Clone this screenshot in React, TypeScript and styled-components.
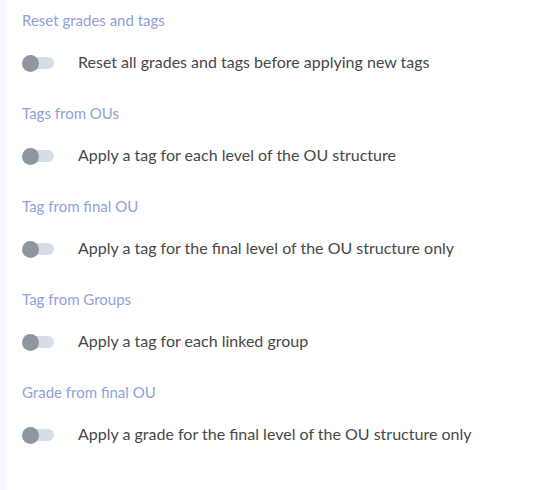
import React from "react";
import styled, { createGlobalStyle } from "styled-components";

const GlobalStyle = createGlobalStyle`
  html, body {
    margin: 0;
    padding: 0;
    background: #ffffff;
  }
  body {
    font-family: "Lato", "Open Sans", sans-serif;
  }
`;

const sections = [
  { title: "Reset grades and tags", label: "Reset all grades and tags before applying new tags" },
  { title: "Tags from OUs", label: "Apply a tag for each level of the OU structure" },
  { title: "Tag from final OU", label: "Apply a tag for the final level of the OU structure only" },
  { title: "Tag from Groups", label: "Apply a tag for each linked group" },
  { title: "Grade from final OU", label: "Apply a grade for the final level of the OU structure only" },
];

const App = () => {
  return (
    <>
      <GlobalStyle />
      <Page>
        <SideStrip />
        <Content>
          {sections.map((s) => (
            <Section key={s.title}>
              <Heading>{s.title}</Heading>
              <Row>
                <Switch>
                  <Track />
                  <Thumb />
                </Switch>
                <Label>{s.label}</Label>
              </Row>
            </Section>
          ))}
        </Content>
      </Page>
    </>
  );
};

export default App;

const Page = styled.div`
  display: flex;
  width: 552px;
  height: 490px;
  overflow: hidden;
`;

const SideStrip = styled.div`
  width: 7px;
  flex-shrink: 0;
  background: #f5f8fd;
`;

const Content = styled.div`
  flex: 1;
  padding: 10px 0 0 15px;
  display: flex;
  flex-direction: column;
`;

const Section = styled.div`
  height: 93px;
  display: flex;
  flex-direction: column;
`;

const Heading = styled.div`
  font-size: 15px;
  line-height: 20px;
  color: #8fa2d8;
`;

const Row = styled.div`
  display: flex;
  align-items: center;
  margin-top: 22px;
  height: 22px;
`;

const Switch = styled.div`
  position: relative;
  width: 32px;
  height: 17px;
  margin-right: 24px;
`;

const Track = styled.div`
  position: absolute;
  left: 3px;
  right: 0;
  top: 2.5px;
  height: 12px;
  border-radius: 6px;
  background: #d6dcea;
`;

const Thumb = styled.div`
  position: absolute;
  left: 0;
  top: 0;
  width: 17px;
  height: 17px;
  border-radius: 50%;
  background: #8d97a2;
`;

const Label = styled.div`
  font-size: 16px;
  line-height: 20px;
  padding-bottom: 2px;
  color: #484848;
`;
